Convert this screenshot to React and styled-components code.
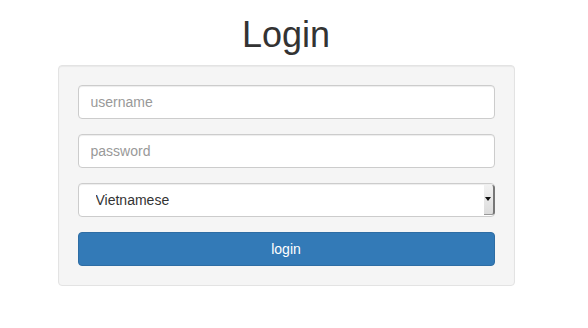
import React from 'react';
import styled, { createGlobalStyle } from 'styled-components';

const GlobalStyle = createGlobalStyle`
  * { box-sizing: border-box; }
  body {
    margin: 0;
    background: #fff;
    font-family: "Liberation Sans", Arial, sans-serif;
    font-size: 14px;
    color: #333;
  }
`;

const Page = styled.div`
  width: 572px;
  padding-top: 15px;
  display: flex;
  flex-direction: column;
  align-items: center;
`;

const Title = styled.h1`
  margin: 0 0 10px;
  font-size: 36px;
  font-weight: 500;
  line-height: 1.1;
  color: #333;
`;

const Well = styled.form`
  width: 457px;
  padding: 19px;
  background: #f5f5f5;
  border: 1px solid #e3e3e3;
  border-radius: 4px;
  box-shadow: inset 0 1px 1px rgba(0, 0, 0, 0.05);
  display: flex;
  flex-direction: column;
  gap: 15px;
`;

const Input = styled.input`
  display: block;
  width: 100%;
  height: 34px;
  padding: 6px 12px;
  font: inherit;
  font-size: 14px;
  color: #555;
  background: #fff;
  border: 1px solid #ccc;
  border-radius: 4px;
  box-shadow: inset 0 1px 1px rgba(0, 0, 0, 0.075);
  outline: none;
  &::placeholder { color: #999; }
`;

const SelectWrap = styled.div`
  position: relative;
`;

const Select = styled.select`
  display: block;
  width: 100%;
  height: 34px;
  padding: 6px 17px;
  font: inherit;
  font-size: 14px;
  color: #333;
  background: #fff;
  border: 1px solid #ccc;
  border-radius: 4px;
  box-shadow: inset 0 1px 1px rgba(0, 0, 0, 0.075);
  appearance: none;
  outline: none;
`;

const Arrow = styled.span`
  position: absolute;
  top: 2px;
  right: 0;
  width: 11px;
  height: 30px;
  background: linear-gradient(#f2f2f2, #dcdcdc);
  border-right: 2px solid #777;
  border-bottom: 1px solid #999;
  border-radius: 0 3px 3px 0;
  display: flex;
  align-items: center;
  justify-content: center;
  pointer-events: none;
  &::after {
    content: '';
    border-left: 3px solid transparent;
    border-right: 3px solid transparent;
    border-top: 4px solid #111;
  }
`;

const Button = styled.button`
  display: block;
  width: 100%;
  height: 34px;
  font: inherit;
  font-size: 14px;
  color: #fff;
  background: #337ab7;
  border: 1px solid #2e6da4;
  border-radius: 4px;
`;

export default function App() {
  return (
    <>
      <GlobalStyle />
      <Page>
        <Title>Login</Title>
        <Well onSubmit={(e) => e.preventDefault()}>
          <Input type="text" placeholder="username" />
          <Input type="password" placeholder="password" />
          <SelectWrap>
            <Select defaultValue="vi">
              <option value="vi">Vietnamese</option>
              <option value="en">English</option>
            </Select>
            <Arrow />
          </SelectWrap>
          <Button type="submit">login</Button>
        </Well>
      </Page>
    </>
  );
}
